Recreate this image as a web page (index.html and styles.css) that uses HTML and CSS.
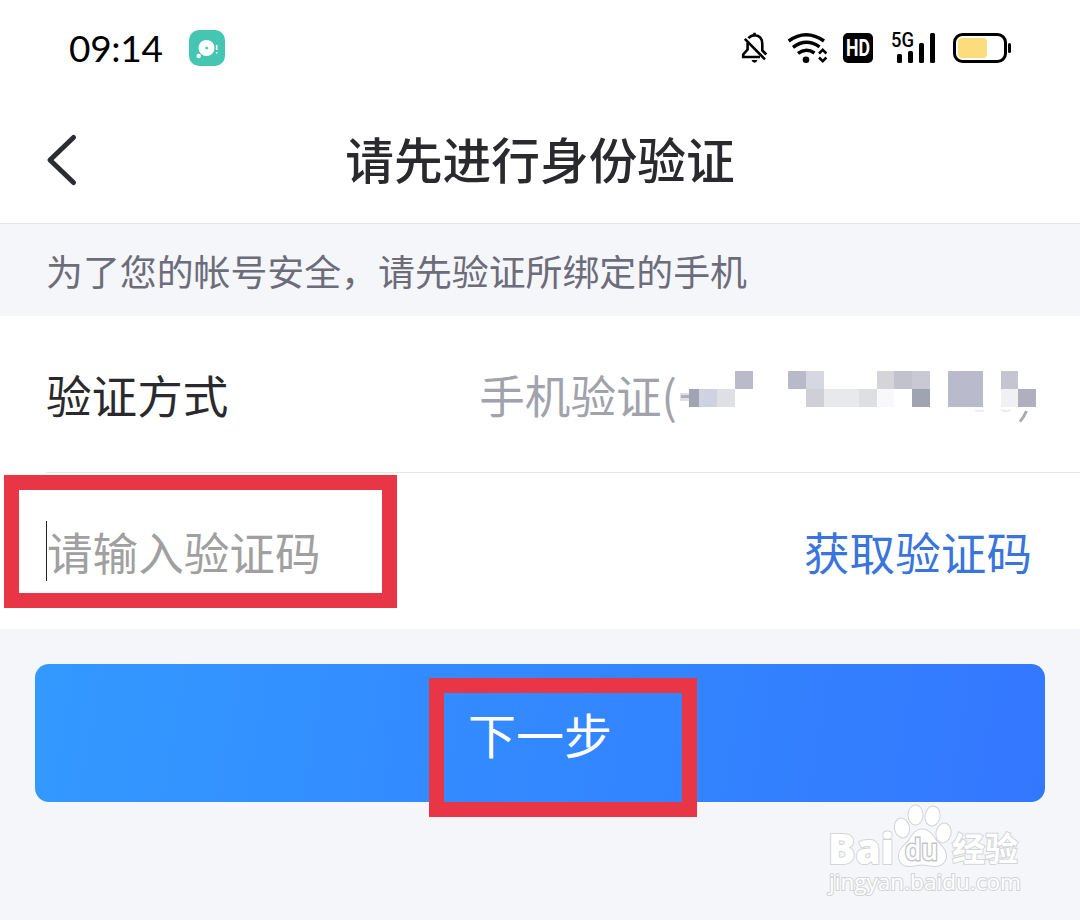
FILE: index.html
```html
<!DOCTYPE html>
<html lang="zh-CN">
<head>
  <meta charset="UTF-8">
  <meta name="viewport" content="width=device-width, initial-scale=1.0">
  <title>请先进行身份验证</title>
  <link rel="stylesheet" href="styles.css">
</head>
<body>
  <div class="status-bar">
    <span class="time">09:14</span>
    <svg class="app-icon" width="36" height="36" viewBox="0 0 36 36">
      <rect width="36" height="36" rx="10" fill="#45c6b3"/>
      <circle cx="17.5" cy="18" r="8" fill="#fff"/>
      <circle cx="17.7" cy="18" r="1.6" fill="#62c9ba"/>
      <circle cx="9.7" cy="26" r="2.2" fill="#fff"/>
      <path d="M27.7 15v5M27.7 22v1.6" stroke="#fff" stroke-width="1.6"/>
    </svg>
    <svg class="status-icons" width="276" height="40" viewBox="738 28 276 40">
      <!-- silent bell -->
      <g fill="none" stroke="#000" stroke-width="2.6">
        <path d="M748.4 38.2Q751 35.2 754.5 35.2Q762.3 35.6 762.3 44V50.5L766.3 54.5"/>
        <path d="M747.6 42.5V49.5L743.2 54.5V57H760"/>
        <path d="M744.8 38.8L765 59.3M754.5 35V32.8"/>
      </g>
      <path d="M751.5 60h6q-1 2.8-3 2.8t-3-2.8z"/>
      <!-- wifi -->
      <g fill="none" stroke="#000" stroke-width="3.4">
        <path d="M788.7 41Q806 28.5 824 41"/>
        <path d="M793 47.4Q806 37.6 819.5 46.8"/>
        <path d="M798 53.4Q806 47.2 814.5 53"/>
      </g>
      <circle cx="806" cy="59.8" r="3.3"/>
      <path d="M819 53.5L822.7 49.8L826.4 53.5M819 57.5L822.7 61.2L826.4 57.5" fill="none" stroke="#000" stroke-width="2.5"/>
      <!-- HD -->
      <rect x="843" y="33" width="30" height="30" rx="5"/>
      <text class="hd-text" x="858" y="56" textLength="24" lengthAdjust="spacingAndGlyphs">HD</text>
      <!-- signal -->
      <text class="net-text" x="891" y="47.3" textLength="23" lengthAdjust="spacingAndGlyphs">5G</text>
      <rect x="897" y="54" width="5" height="9" rx="1.5"/>
      <rect x="908" y="51" width="5" height="12" rx="1.5"/>
      <rect x="919" y="43" width="5" height="20" rx="1.5"/>
      <rect x="930" y="33" width="5" height="30" rx="1.5"/>
      <!-- battery -->
      <rect x="954.5" y="34.5" width="51" height="27" rx="8" fill="none" stroke="#000" stroke-width="3"/>
      <rect x="958" y="38" width="29" height="20" rx="4" fill="#fddc7d"/>
      <rect x="1008" y="43" width="3" height="10" rx="1.5"/>
    </svg>
  </div>

  <header class="header">
    <svg class="back" width="32" height="54" viewBox="0 0 32 54">
      <path d="M27.5 4.5L4 27L27.5 49.5" fill="none" stroke="#2b2b33" stroke-width="5" stroke-linecap="round" stroke-linejoin="round"/>
    </svg>
    <h1>请先进行身份验证</h1>
  </header>

  <p class="notice">为了您的帐号安全，请先验证所绑定的手机</p>

  <div class="form">
    <div class="row">
      <span class="label">验证方式</span>
      <span class="method">手机验证(</span>
      <!-- hidden phone number -->
      <svg class="mosaic" width="358" height="56" viewBox="680 370 358 56">
        <rect x="680" y="393" width="9" height="8" fill="#dfdfe7"/>
        <rect x="681" y="395" width="8" height="3" fill="#b0b0ba"/>
        <rect x="689" y="389" width="10" height="18" fill="#a0a3b1"/>
        <rect x="699" y="389" width="18" height="18" fill="#cfd3e1"/>
        <rect x="717" y="389" width="18" height="18" fill="#dfe0e5"/>
        <rect x="735" y="371" width="18" height="18" fill="#babbc8"/>
        <rect x="788" y="371" width="18" height="18" fill="#b9bac8"/>
        <rect x="806" y="371" width="18" height="18" fill="#d5d7e2"/>
        <rect x="806" y="389" width="18" height="18" fill="#cecfd7"/>
        <rect x="824" y="389" width="35" height="18" fill="#e8e9eb"/>
        <rect x="859" y="389" width="18" height="18" fill="#dedfe1"/>
        <rect x="877" y="389" width="17" height="18" fill="#f8f8fa"/>
        <rect x="877" y="371" width="17" height="18" fill="#d4d4d9"/>
        <rect x="894" y="371" width="18" height="18" fill="#c2c2cd"/>
        <rect x="912" y="371" width="18" height="18" fill="#c8c9d2"/>
        <rect x="912" y="389" width="18" height="18" fill="#a0a4b0"/>
        <rect x="948" y="371" width="35" height="36" fill="#b9bacb"/>
        <rect x="1001" y="371" width="17" height="18" fill="#c5c5d2"/>
        <rect x="1001" y="389" width="17" height="18" fill="#f0f0f5"/>
        <rect x="1018" y="389" width="18" height="18" fill="#afafc0"/>
        <path d="M975 410.500q5 1 9 0M1001 410q5 2 10 0" fill="none" stroke="#ececf1" stroke-width="2"/>
        <path d="M1026.5 411Q1024 417 1020 421.5" fill="none" stroke="#aaaab2" stroke-width="3"/>
      </svg>
    </div>
    <div class="row code-row">
      <span class="code-input">请输入验证码</span>
      <a class="get-code">获取验证码</a>
      <div class="mark mark-input"></div>
    </div>
  </div>

  <div class="next-btn">
    <span>下一步</span>
    <div class="mark mark-next"></div>
  </div>

  <svg class="watermark" width="210" height="105" viewBox="820 800 210 105">
    <g class="wm-shape">
      <ellipse cx="902" cy="828" rx="7" ry="9.5" transform="rotate(-12 902 828)"/>
      <ellipse cx="915.5" cy="815" rx="7" ry="9.5"/>
      <ellipse cx="932.5" cy="816" rx="7" ry="9.5" transform="rotate(10 932.5 816)"/>
      <ellipse cx="943.5" cy="833" rx="7" ry="9.5" transform="rotate(12 943.5 833)"/>
      <path d="M922 829.5C928 829.5 932 834 935 839C939 845 946 848 946 856C946 862 941 866 935 866C930 866 927 864.5 922 864.5C917 864.5 914 866 909 866C903 866 899 862 899 856C899 848 906 845 910 839C913 834 916 829.5 922 829.5Z"/>
    </g>
    <text class="wm-big" x="828" y="864" textLength="66" lengthAdjust="spacingAndGlyphs">Bai</text>
    <text class="wm-du" x="905" y="860" textLength="33" lengthAdjust="spacingAndGlyphs">du</text>
    <text class="wm-cn" x="952" y="861" textLength="66" lengthAdjust="spacingAndGlyphs">经验</text>
    <text class="wm-url" x="829" y="890" textLength="192" lengthAdjust="spacingAndGlyphs">jingyan.baidu.com</text>
  </svg>
</body>
</html>
```
FILE: styles.css
```css
* {
  box-sizing: border-box;
}
body {
  margin: 0;
  height: 920px;
  overflow: hidden;
  background: #f5f6fa;
  color: #2a2a2e;
  font-family: "Noto Sans CJK SC", sans-serif;
  font-weight: 400;
}
.status-bar {
  display: flex;
  align-items: center;
  height: 96px;
  padding: 0 66px 0 69px;
  background: #fff;
}
.time {
  width: 120px;
  font-family: Lato, sans-serif;
  font-weight: 400;
  font-size: 37px;
  letter-spacing: -0.3px;
  line-height: 40px;
  color: #000;
}
.status-icons {
  margin-left: auto;
}
.hd-text {
  font-family: Roboto, sans-serif;
  font-weight: 700;
  font-size: 23px;
  text-anchor: middle;
  fill: #fff;
}
.net-text {
  font-family: Roboto, sans-serif;
  font-weight: 500;
  font-size: 20px;
}
.header {
  display: grid;
  grid-template-columns: 80px 1fr 80px;
  align-items: center;
  height: 128px;
  background: #fff;
  border-bottom: 1px solid #e3e4e8;
}
.back {
  margin-left: 46px;
}
h1 {
  margin: 0;
  padding-bottom: 3px;
  text-align: center;
  font-size: 48.7px;
  font-weight: 500;
  line-height: 60px;
}
.notice {
  margin: 0;
  height: 92px;
  padding-left: 46px;
  font-size: 36.9px;
  line-height: 92px;
  color: #6c6c7a;
}
.form {
  background: #fff;
}
.row {
  position: relative;
  display: flex;
  align-items: center;
  height: 157px;
  padding-left: 46px;
  font-size: 45.6px;
  line-height: 60px;
}
.row::after {
  content: "";
  position: absolute;
  left: 46px;
  right: 0;
  bottom: 0;
  height: 1px;
  background: #e6e6e8;
}
.code-row {
  height: 156px;
}
.code-row::after {
  display: none;
}
.label,
.method {
  padding-bottom: 2px;
}
.method {
  margin-left: auto;
  margin-right: 3px;
  color: #a2a2ad;
}
.mosaic {
  margin: 7px 42px 0 0;
}
.code-input {
  border-left: 1px solid #222;
  color: #a0a0a0;
}
.get-code {
  margin-left: auto;
  margin-right: 48px;
  color: #3975dc;
}
.next-btn {
  position: relative;
  display: flex;
  justify-content: center;
  height: 138px;
  margin: 35px 35px 0;
  padding-top: 34px;
  border-radius: 14px;
  background: linear-gradient(100deg, #3399ff, #3377ff);
  color: #fff;
  font-size: 48px;
  line-height: 70px;
}
/* red highlight frames */
.mark {
  position: absolute;
  border: 15px solid #e83647;
}
.mark-input {
  left: 4px;
  top: 2px;
  width: 393px;
  height: 133px;
}
.mark-next {
  left: 394px;
  top: 14px;
  width: 268px;
  height: 139px;
}
.watermark {
  position: absolute;
  left: 820px;
  top: 800px;
}
.wm-shape,
.watermark text {
  fill: #fff;
  stroke: #d3d4d8;
  stroke-width: 2px;
  paint-order: stroke;
}
.wm-big {
  font-family: "Open Sans", sans-serif;
  font-weight: 800;
  font-size: 43px;
}
.watermark .wm-du {
  font-family: "Open Sans", sans-serif;
  font-weight: 600;
  font-size: 29px;
  stroke: #c3c4c8;
  stroke-width: 3px;
}
.wm-cn {
  font-weight: 700;
  font-size: 33px;
}
.wm-url {
  font-family: "Open Sans", sans-serif;
  font-weight: 400;
  font-size: 21px;
}
```
